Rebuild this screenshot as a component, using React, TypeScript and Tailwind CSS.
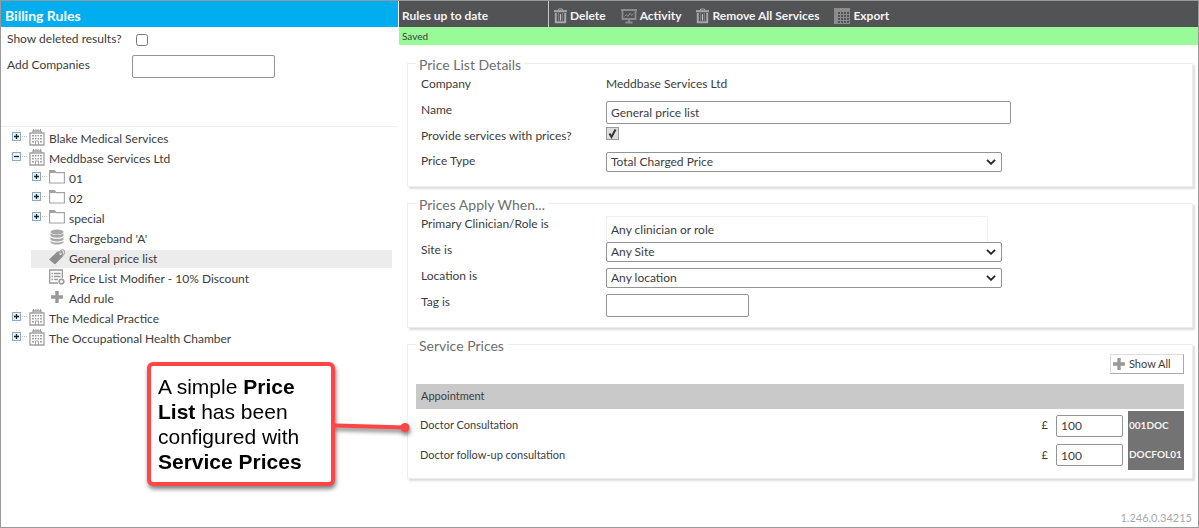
import React, { useState } from "react";

type NodeIcon = "company" | "folder" | "chargeband" | "tag" | "modifier" | "plus";

interface TreeNode {
  id: string;
  label: string;
  icon: NodeIcon;
  level: number;
  toggle?: "open" | "closed";
}

interface ServicePrice {
  id: string;
  name: string;
  price: string;
  code: string;
}

const nodes: TreeNode[] = [
  { id: "blake", label: "Blake Medical Services", icon: "company", level: 0, toggle: "closed" },
  { id: "meddbase", label: "Meddbase Services Ltd", icon: "company", level: 0, toggle: "open" },
  { id: "01", label: "01", icon: "folder", level: 1, toggle: "closed" },
  { id: "02", label: "02", icon: "folder", level: 1, toggle: "closed" },
  { id: "special", label: "special", icon: "folder", level: 1, toggle: "closed" },
  { id: "chargeband", label: "Chargeband 'A'", icon: "chargeband", level: 1 },
  { id: "general", label: "General price list", icon: "tag", level: 1 },
  { id: "modifier", label: "Price List Modifier - 10% Discount", icon: "modifier", level: 1 },
  { id: "add", label: "Add rule", icon: "plus", level: 1 },
  { id: "practice", label: "The Medical Practice", icon: "company", level: 0, toggle: "closed" },
  { id: "chamber", label: "The Occupational Health Chamber", icon: "company", level: 0, toggle: "closed" },
];

const initialServices: ServicePrice[] = [
  { id: "doc", name: "Doctor Consultation", price: "100", code: "001DOC" },
  { id: "follow", name: "Doctor follow-up consultation", price: "100", code: "DOCFOL01" },
];

const PlusIcon = ({ className }: { className: string }) => (
  <svg viewBox="0 0 12 12" className={className} fill="#999">
    <path d="M4.3 0h3.4v4.3H12v3.4H7.7V12H4.3V7.7H0V4.3h4.3z" />
  </svg>
);

const TrashIcon = () => (
  <svg viewBox="0 0 13 16" className="h-4 w-[13px]" fill="none" stroke="#a6a6a6">
    <path d="M4.5 2.5V1h4v1.5" />
    <path d="M0 3.2h13" strokeWidth="2.2" />
    <path d="M1.8 5v9.2h9.4V5" strokeWidth="2" />
    <path d="M4.5 5v8M8.5 5v8" stroke="#7c7c7c" />
    <path d="M6.5 6v6.5" stroke="#c4c4c4" strokeWidth="1.2" />
  </svg>
);

const ActivityIcon = () => (
  <svg viewBox="0 0 16 16" className="h-4 w-4" fill="none" stroke="#8c8c8c">
    <path d="M0 2h16" strokeWidth="2" />
    <path d="M1.5 3v8h13V3" strokeWidth="1.8" />
    <path d="M3.5 8.500l2-2 1.500 2 2-3.500 1.500 2.500 2-2" />
    <path d="M8 11v2.500M4.500 14.500h7" strokeWidth="1.800" />
  </svg>
);

const GridIcon = () => (
  <svg viewBox="0 0 16 16" className="h-4 w-4" fill="none" stroke="#8c8c8c">
    <path d="M0 .5h16M0 3.500h16M0 6.500h16M0 9.500h16M0 12.500h16M0 15.500h16M.5 0v16M3.500 0v16M6.500 0v16M9.500 0v16M12.500 0v16M15.500 0v16" />
    <path d="M0 0h16v3H0zM0 1h3v14H0z" fill="#8c8c8c" stroke="none" />
  </svg>
);

const CompanyIcon = () => (
  <svg viewBox="0 0 16 17" className="h-[17px] w-4" fill="none" stroke="#a0a0a0">
    <path d="M1 16V4h14v12z" strokeWidth="1.300" />
    <path d="M4 4V2h8v2" strokeWidth="1.300" />
    <path d="M4.500 0v2M7 0v2M9 0v2M11.500 0v2" />
    <path
      d="M3 6h2v1.500H3zM6 6h1.500v1.500H6zM8.500 6H10v1.500H8.500zM11 6h2v1.500h-2zM3 9h2v1.500H3zM6 9h1.500v1.500H6zM8.500 9H10v1.500H8.500zM11 9h2v1.500h-2zM3 12h2v1.500H3zM11 12h2v1.500h-2z"
      fill="#a0a0a0"
      stroke="none"
    />
    <path d="M6.500 16v-4h3v4" />
  </svg>
);

const FolderIcon = () => (
  <svg viewBox="0 0 16 16" className="h-4 w-4" fill="none" stroke="#a2a2a2">
    <path d="M.6 14V1.500h5L7 3.600h8.400V14z" strokeWidth="1.100" />
    <path d="M1 1.500h4.500L6.800 4H1z" fill="#a2a2a2" stroke="none" />
  </svg>
);

const ChargebandIcon = () => (
  <svg viewBox="0 0 16 16" className="h-4 w-4" fill="#a8a8a8">
    <ellipse cx="8" cy="3" rx="6.500" ry="2.500" />
    <path d="M1.500 4.300c2 2 11 2 13 0v2.800c-2 2.200-11 2.200-13 0z" />
    <path d="M1.500 8.300c2 2 11 2 13 0v2.500c-2 2.200-11 2.200-13 0z" />
    <path d="M1.500 12c2 2 11 2 13 0v1.500c-2 2.800-11 2.800-13 0z" />
  </svg>
);

const TagIcon = () => (
  <svg viewBox="0 0 16 16" className="h-4 w-4">
    <path d="M0 10.500L8.500 2.500l5-.5.8 5L6 15.500z" fill="#8f8f8f" />
    <circle cx="11.500" cy="4.800" r="1.200" fill="#eee" />
    <path d="M11 4.500c0-4 4-5 4.500-2 .3 2-1 3.500-2.500 4" fill="none" stroke="#a8a8a8" strokeWidth="1.100" />
  </svg>
);

const ModifierIcon = () => (
  <svg viewBox="0 0 16 16" className="h-4 w-4" fill="none" stroke="#999">
    <path d="M9 14H.7V1h12.600v8" strokeWidth="1.300" />
    <path d="M5 4.500h6.500M5 7.500h6.500M5 10.500h4M2.500 4.500H4M2.500 7.500H4M2.500 10.500H4" strokeWidth="1.300" />
    <circle cx="12.500" cy="12.500" r="2.300" strokeWidth="1.600" />
  </svg>
);

const TreeIcon = ({ icon }: { icon: NodeIcon }) => {
  if (icon === "company") return <CompanyIcon />;
  if (icon === "folder") return <FolderIcon />;
  if (icon === "chargeband") return <ChargebandIcon />;
  if (icon === "tag") return <TagIcon />;
  if (icon === "modifier") return <ModifierIcon />;
  return <PlusIcon className="mx-0.5 h-3 w-3" />;
};

const ToggleIcon = ({ open }: { open: boolean }) => (
  <svg viewBox="0 0 17 14" className="h-3.5 w-[17px]" fill="none">
    <path d="M5.500 0v14" stroke="#ddd" strokeDasharray="1 1" />
    <rect x="1.500" y="2.500" width="8" height="8" fill="#eef4fa" stroke="#86aace" />
    <path d={open ? "M3 6.500h5" : "M3 6.500h5M5.500 4v5"} stroke="#222" strokeWidth="1.300" />
    <path d="M11 6.500h6" stroke="#c4c4c4" strokeDasharray="1 1" />
  </svg>
);

interface SelectFieldProps {
  id: string;
  options: string[];
}

const SelectField: React.FC<SelectFieldProps> = ({ id, options }) => (
  <div className="relative w-full max-w-[396px]">
    <select
      id={id}
      className="block h-5 w-full appearance-none rounded-xs border border-[#949494] bg-white px-1 leading-4"
    >
      {options.map((option) => (
        <option key={option}>{option}</option>
      ))}
    </select>
    <svg
      viewBox="0 0 10 6"
      className="pointer-events-none absolute top-[7px] right-1.5 h-1.5 w-2.5"
      fill="none"
      stroke="#222"
      strokeWidth="1.800"
    >
      <path d="M1 .8l4 4 4-4" />
    </svg>
  </div>
);

interface SectionProps {
  title: string;
  children: React.ReactNode;
}

const Section: React.FC<SectionProps> = ({ title, children }) => (
  <fieldset className="min-w-0 border border-[#eeeeea] px-2 shadow-[2px_2px_2px_#dcdcdc]">
    <legend className="px-[3px] pt-1 text-sm leading-4 text-[#6e6e6e]">{title}</legend>
    {children}
  </fieldset>
);

const labelClass = "w-[185px] shrink-0 leading-4";
const inputClass = "rounded-xs border border-[#949494] bg-white px-1";
const toolClass = "flex items-center gap-[3px] whitespace-nowrap";

export default function App() {
  const [selected, setSelected] = useState("general");
  const [showDeleted, setShowDeleted] = useState(false);
  const [name, setName] = useState("General price list");
  const [withPrices, setWithPrices] = useState(true);
  const [services, setServices] = useState(initialServices);

  const updatePrice = (id: string, price: string) => {
    setServices(services.map((s) => (s.id === id ? { ...s, price } : s)));
  };

  return (
    <div className="relative flex min-h-screen border border-[#999] bg-white font-[Lato,Carlito,sans-serif] text-xs text-[#3c3c3c]">
      {/* Rules tree */}
      <aside className="w-[397px] shrink-0">
        <h1 className="flex h-[26px] items-center bg-[#00aeef] px-1 pt-1 text-sm font-bold text-white">
          Billing Rules
        </h1>
        <div className="h-[100px] border-b border-[#f0f0f0] px-1.5 pt-1">
          <div className="flex h-4 items-center">
            <label htmlFor="show-deleted" className="w-[129px]">
              Show deleted results?
            </label>
            <input
              id="show-deleted"
              type="checkbox"
              className="mt-0.5 h-3 w-3"
              checked={showDeleted}
              onChange={(e) => setShowDeleted(e.target.checked)}
            />
          </div>
          <div className="mt-2 flex items-start">
            <label htmlFor="add-companies" className="w-[125px] pt-0.5">
              Add Companies
            </label>
            <input id="add-companies" type="text" className={`h-[23px] w-[143px] ${inputClass}`} />
          </div>
        </div>
        <ul className="pt-0.5 pr-1.5">
          {nodes.map((node) => (
            <li key={node.id} className={node.level === 1 ? "pl-[30px]" : "pl-2.5"}>
              <button
                onClick={() => setSelected(node.id)}
                className={`flex h-5 w-full items-center text-left ${
                  selected === node.id ? "bg-[#ececec] bg-clip-content py-px" : ""
                }`}
              >
                <span className="flex w-[18px] shrink-0 pb-1">
                  {node.toggle && <ToggleIcon open={node.toggle === "open"} />}
                </span>
                <span className="flex w-5 shrink-0 pb-1">
                  <TreeIcon icon={node.icon} />
                </span>
                {node.label}
              </button>
            </li>
          ))}
        </ul>
      </aside>

      {/* Rule details */}
      <main className="flex min-w-0 flex-1 flex-col pl-px">
        <header className="flex h-[26px] items-stretch bg-[#525355] font-bold text-[#f2f2f2]">
          <div className="flex w-[150px] shrink-0 items-center border-r border-[#c8c8c8] px-[3px] pt-[3px]">
            Rules up to date
          </div>
          <nav className="flex gap-[15px] pt-[3px] pl-[5px]">
            <button className={toolClass}>
              <TrashIcon />
              Delete
            </button>
            <button className={toolClass}>
              <ActivityIcon />
              Activity
            </button>
            <button className={toolClass}>
              <TrashIcon />
              Remove All Services
            </button>
            <button className={toolClass}>
              <GridIcon />
              Export
            </button>
          </nav>
        </header>
        <div className="flex h-[18px] items-center bg-[#98fb98] px-[3px] pt-0.5 text-[10px]">Saved</div>

        <div className="flex flex-col gap-1.5 pt-2 pr-[5px] pl-2">
          <Section title="Price List Details">
            <div className="px-[5px] pt-[3px] pb-3.5">
              <div className="flex h-[25px]">
                <span className={labelClass}>Company</span>
                <span>Meddbase Services Ltd</span>
              </div>
              <div className="flex h-[26px] items-start">
                <label htmlFor="name" className={`pt-px ${labelClass}`}>
                  Name
                </label>
                <input
                  id="name"
                  type="text"
                  className={`h-[23px] w-full max-w-[405px] ${inputClass}`}
                  value={name}
                  onChange={(e) => setName(e.target.value)}
                />
              </div>
              <div className="flex h-[25px] items-start">
                <label htmlFor="with-prices" className={`pt-px ${labelClass}`}>
                  Provide services with prices?
                </label>
                <span className="relative flex">
                  <input
                    id="with-prices"
                    type="checkbox"
                    className="h-[13px] w-[13px] appearance-none border border-[#999] bg-[#dedede]"
                    checked={withPrices}
                    onChange={(e) => setWithPrices(e.target.checked)}
                  />
                  {withPrices && (
                    <svg
                      viewBox="0 0 13 13"
                      className="pointer-events-none absolute inset-0"
                      fill="none"
                      stroke="#333"
                      strokeWidth="2"
                    >
                      <path d="M3.500 6.500l2 3.500 4-7.500" />
                    </svg>
                  )}
                </span>
              </div>
              <div className="flex items-start">
                <label htmlFor="price-type" className={`pt-px ${labelClass}`}>
                  Price Type
                </label>
                <SelectField id="price-type" options={["Total Charged Price"]} />
              </div>
            </div>
          </Section>

          <Section title="Prices Apply When...">
            <div className="px-[5px] pt-[3px] pb-2.5">
              <div className="flex h-[26px]">
                <label htmlFor="clinician" className={labelClass}>
                  Primary Clinician/Role is
                </label>
                <input
                  id="clinician"
                  type="text"
                  className="h-[26px] w-full max-w-[382px] border border-b-0 border-[#edf1f5] px-1"
                  defaultValue="Any clinician or role"
                />
              </div>
              <div className="flex h-[26px] items-start">
                <label htmlFor="site" className={labelClass}>
                  Site is
                </label>
                <SelectField id="site" options={["Any Site"]} />
              </div>
              <div className="flex h-[26px] items-start">
                <label htmlFor="location" className={labelClass}>
                  Location is
                </label>
                <SelectField id="location" options={["Any location"]} />
              </div>
              <div className="flex items-start">
                <label htmlFor="tag" className={labelClass}>
                  Tag is
                </label>
                <input id="tag" type="text" className={`h-[23px] w-[143px] ${inputClass}`} />
              </div>
            </div>
          </Section>

          <Section title="Service Prices">
            <div className="flex justify-end pb-2.5">
              <button className="flex h-5 w-[74px] items-center gap-1 border border-[#ddd] border-r-[#aaa] border-b-[#aaa] px-0.5 text-[11px]">
                <PlusIcon className="h-3 w-3" />
                Show All
              </button>
            </div>
            <table className="mb-2 w-full text-[11px]">
              <thead>
                <tr className="h-[26px] border-b-2 border-white bg-[#c9c9c9]">
                  <th colSpan={3} className="px-[5px] text-left font-normal">
                    Appointment
                  </th>
                </tr>
              </thead>
              <tbody>
                {services.map((service) => (
                  <tr key={service.id} className="h-[30px]">
                    <td className="px-1">{service.name}</td>
                    <td className="w-[90px]">
                      <label className="flex items-center justify-end gap-2 pr-[5px]">
                        £
                        <input
                          type="text"
                          aria-label={`${service.name} price`}
                          className={`h-[22px] w-[67px] text-xs ${inputClass}`}
                          value={service.price}
                          onChange={(e) => updatePrice(service.id, e.target.value)}
                        />
                      </label>
                    </td>
                    <td className="w-14 bg-[#737373] px-px text-[10px] font-bold text-[#f2f2f2]">{service.code}</td>
                  </tr>
                ))}
              </tbody>
            </table>
          </Section>
        </div>
        <footer className="mt-auto pr-1.5 pb-px text-right text-[11px] leading-4 text-[#aaa]">1.246.0.34215</footer>
      </main>

      {/* Callout over the page */}
      <div className="absolute top-[361px] left-[146px] flex drop-shadow-[1px_3px_2px_#00000080]">
        <p className="h-[124px] w-[188px] rounded-md border-4 border-[#ff4545] bg-white px-[7px] pt-2 font-['Liberation_Sans',Arial,sans-serif] text-[21px] leading-[25px] whitespace-nowrap text-black">
          A simple <b>Price</b>
          <br />
          <b>List</b> has been
          <br />
          configured with
          <br />
          <b>Service Prices</b>
        </p>
        <svg viewBox="0 0 76 124" className="h-[124px] w-[76px]" fill="none" stroke="#ff4545">
          <path d="M-2 63.500L70 65.500" strokeWidth="4" />
          <circle cx="70" cy="65.500" r="4.500" fill="#ff4545" stroke="none" />
        </svg>
      </div>
    </div>
  );
}
